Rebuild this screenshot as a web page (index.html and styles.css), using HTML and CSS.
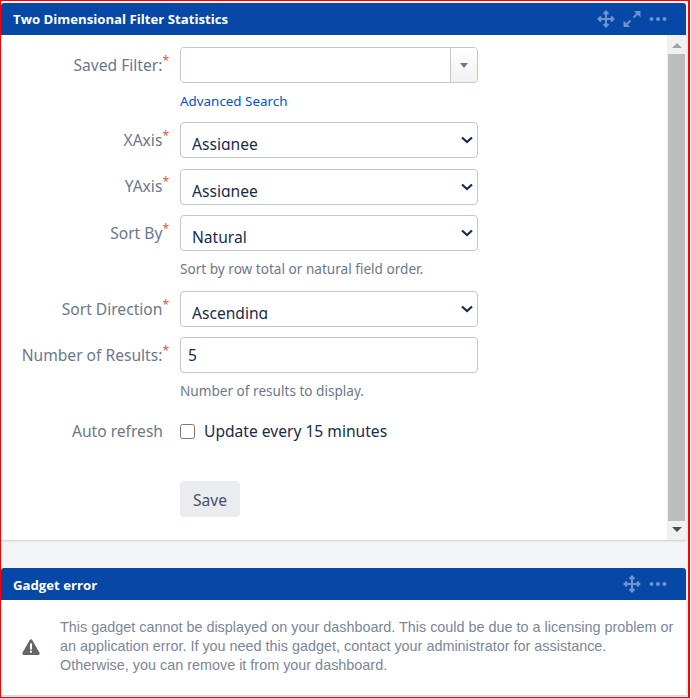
FILE: index.html
```html
<!DOCTYPE html>
<html lang="en">
<head>
<meta charset="utf-8">
<title>Dashboard gadgets</title>
<link rel="stylesheet" href="styles.css">
</head>
<body>
<div class="frame">
  <section class="gadget">
    <header class="bar">
      <h2 class="bar-title">Two Dimensional Filter Statistics</h2>
      <div class="bar-icons">
        <svg class="ico" width="18" height="18" viewBox="0 0 18 18"><path class="ln" d="M9 2v14M2 9h14M6.500 4L9 1.500 11.500 4M6.500 14L9 16.500 11.500 14M4 6.500L1.500 9 4 11.500M14 6.500L16.500 9 14 11.500"/></svg>
        <svg class="ico" width="18" height="18" viewBox="0 0 18 18"><path d="M11 1h6.500v6.500z"/><path d="M7 17H.5v-6.500z"/><path class="ln" d="M14.500 3.500l-4 4M3.500 14.500l4-4"/></svg>
        <svg class="ico dots" width="18" height="18" viewBox="0 0 18 18"><circle cx="2.500" cy="9" r="2"/><circle cx="9" cy="9" r="2"/><circle cx="15.500" cy="9" r="2"/></svg>
      </div>
    </header>
    <div class="scroll-wrap">
      <form class="form">
        <div class="row row-filter">
          <label class="lbl">Saved Filter:<span class="req">*</span></label>
          <div class="field">
            <div class="combo"><input class="combo-input" type="text"><span class="combo-btn"><i class="tri"></i></span></div>
            <a class="link">Advanced Search</a>
          </div>
        </div>
        <div class="row row-x">
          <label class="lbl">XAxis<span class="req">*</span></label>
          <div class="field"><div class="sel-wrap"><select class="ctl sel"><option>Assignee</option></select><svg class="chev" width="12" height="8" viewBox="0 0 12 8"><path d="M1 1.500l5 4.500 5-4.500"/></svg></div></div>
        </div>
        <div class="row row-y">
          <label class="lbl">YAxis<span class="req">*</span></label>
          <div class="field"><div class="sel-wrap"><select class="ctl sel"><option>Assignee</option></select><svg class="chev" width="12" height="8" viewBox="0 0 12 8"><path d="M1 1.500l5 4.500 5-4.500"/></svg></div></div>
        </div>
        <div class="row row-sort">
          <label class="lbl">Sort By<span class="req">*</span></label>
          <div class="field"><div class="sel-wrap"><select class="ctl sel"><option>Natural</option></select><svg class="chev" width="12" height="8" viewBox="0 0 12 8"><path d="M1 1.500l5 4.500 5-4.500"/></svg></div><p class="hint">Sort by row total or natural field order.</p></div>
        </div>
        <div class="row row-dir">
          <label class="lbl">Sort Direction<span class="req">*</span></label>
          <div class="field"><div class="sel-wrap"><select class="ctl sel"><option>Ascending</option></select><svg class="chev" width="12" height="8" viewBox="0 0 12 8"><path d="M1 1.500l5 4.500 5-4.500"/></svg></div></div>
        </div>
        <div class="row row-num">
          <label class="lbl">Number of Results:<span class="req">*</span></label>
          <div class="field"><input class="ctl txt" type="text" value="5"><p class="hint">Number of results to display.</p></div>
        </div>
        <div class="row row-auto">
          <label class="lbl">Auto refresh</label>
          <div class="field check"><input class="box" type="checkbox"><span class="check-text">Update every 15 minutes</span></div>
        </div>
        <div class="row row-save">
          <span class="lbl"></span>
          <div class="field"><button class="save" type="button">Save</button></div>
        </div>
      </form>
      <div class="scrollbar">
        <i class="sb-up"></i>
        <div class="sb-thumb"></div>
        <i class="sb-down"></i>
      </div>
    </div>
  </section>
  <section class="gadget gadget-error">
    <header class="bar">
      <h2 class="bar-title">Gadget error</h2>
      <div class="bar-icons">
        <svg class="ico" width="18" height="18" viewBox="0 0 18 18"><path class="ln" d="M9 2v14M2 9h14M6.500 4L9 1.500 11.500 4M6.500 14L9 16.500 11.500 14M4 6.500L1.500 9 4 11.500M14 6.500L16.500 9 14 11.500"/></svg>
        <svg class="ico dots" width="18" height="18" viewBox="0 0 18 18"><circle cx="2.500" cy="9" r="2"/><circle cx="9" cy="9" r="2"/><circle cx="15.500" cy="9" r="2"/></svg>
      </div>
    </header>
    <div class="err">
      <svg class="warn" width="18" height="16" viewBox="0 0 18 16"><path d="M7.600 1.200a1.600 1.600 0 0 1 2.800 0l7 12.300A1.600 1.600 0 0 1 16 16H2A1.600 1.600 0 0 1 .6 13.500z"/><rect class="mark" x="8" y="4.500" width="2" height="6"/><rect class="mark" x="8" y="11.700" width="2" height="2"/></svg>
      <p class="err-text">This gadget cannot be displayed on your dashboard. This could be due to a licensing problem or an application error. If you need this gadget, contact your administrator for assistance. Otherwise, you can remove it from your dashboard.</p>
    </div>
  </section>
</div>
</body>
</html>
```
FILE: styles.css
```css
* { box-sizing: border-box; }
html, body { margin: 0; padding: 0; }
body { width: 691px; height: 698px; overflow: hidden; background: #fff; font-family: "Noto Sans", sans-serif; }
.frame { width: 690px; height: 698px; border: 1px solid #f00; border-right-width: 2px; padding: 2px 2px 0 0; background: #f4f5f7; overflow: hidden; }
.gadget { background: #fff; border-radius: 3px 3px 0 0; box-shadow: 0 1px 2px rgba(9,30,66,.18); }
.gadget-error { margin-top: 28px; }
.gadget-error .bar-title { padding-top: 2px; }
.bar { height: 32px; background: #0747a6; border-radius: 3px 3px 0 0; display: flex; align-items: center; justify-content: space-between; padding: 0 19px 0 12px; }
.bar-title { margin: 0; font: 700 13.200px/32px "Open Sans", sans-serif; color: #fff; }
.bar-icons { display: flex; gap: 8px; align-items: center; }
.ico { fill: #6d94cd; display: block; }
.ico .ln { stroke: #6d94cd; stroke-width: 2; fill: none; }
.scroll-wrap { display: flex; height: 505px; }
.form { flex: 1; padding-top: 12px; }
.row { display: flex; }
.lbl { width: 162px; text-align: right; color: #6b778c; font-size: 15.600px; line-height: 36px; flex: none; white-space: nowrap; }
.row-y .lbl { line-height: 34px; }
.req { color: #e5533a; font-size: 12px; position: relative; top: -6px; line-height: 0; margin-right: -6px; }
.field { margin-left: 17px; width: 298px; }
.combo { display: flex; height: 36px; width: 298px; border: 1px solid #c1c7d0; border-radius: 4px; overflow: hidden; }
.combo-input { flex: 1; min-width: 0; border: 0; outline: 0; padding: 0 8px; background: #fff; }
.combo-btn { width: 27px; border-left: 1px solid #c1c7d0; background: linear-gradient(#fff, #f1f1f3); display: flex; align-items: center; justify-content: center; }
.tri { width: 0; height: 0; border: 4px solid transparent; border-top: 5px solid #6b778c; border-bottom: 0; }
.link { display: block; color: #0052cc; font-size: 13.400px; line-height: 18px; margin-top: 9px; }
.ctl { display: block; width: 298px; height: 36px; border: 1px solid #c1c7d0; border-radius: 4px; background: #fff; color: #172b4d; font-family: "Noto Sans", sans-serif; font-size: 15.600px; }
.sel-wrap { position: relative; }
.sel { appearance: none; padding: 10px 24px 7px 11px; }
.chev { position: absolute; right: 5px; top: 14px; fill: none; stroke: #172b4d; stroke-width: 2.200; }
.txt { padding: 0 7px; outline: 0; }
.hint { margin: 9px 0 0; color: #6b778c; font-size: 13.600px; line-height: 18px; }
.row-x { margin-top: 12px; }
.row-y { margin-top: 11px; }
.row-sort { margin-top: 10px; }
.row-dir { margin-top: 13px; }
.row-num { margin-top: 10px; }
.row-auto { margin-top: 13px; align-items: center; }
.row-save { margin-top: 32px; }
.check { display: flex; align-items: center; gap: 9px; color: #172b4d; font-size: 15.600px; line-height: 34px; }
.box { width: 15px; height: 15px; margin: 0; accent-color: #0052cc; }
.save { width: 60px; height: 36px; border: 0; border-radius: 4px; background: #ebecf0; color: #42526e; font-family: "Noto Sans", sans-serif; font-size: 15.600px; padding: 2px 0 0; }
.scrollbar { width: 19px; background: #f1f1f1; display: flex; flex-direction: column; align-items: center; flex: none; }
.sb-up { width: 0; height: 0; margin: 8px 0 6px; border: 5px solid transparent; border-bottom: 5px solid #a3a3a3; border-top: 0; }
.sb-thumb { width: 17px; flex: 1; background: #bdbdbd; }
.sb-down { width: 0; height: 0; margin: 6px 0 8px; border: 5px solid transparent; border-top: 5px solid #505050; border-bottom: 0; }
.err { display: flex; align-items: center; height: 95px; padding-bottom: 2px; }
.warn { margin-left: 21px; flex: none; fill: #666; }
.warn .mark { fill: #fff; }
.err-text { margin: 0 0 0 20px; width: 618px; color: #7a869a; font: 14.400px/19px "Liberation Sans", sans-serif; }
```
